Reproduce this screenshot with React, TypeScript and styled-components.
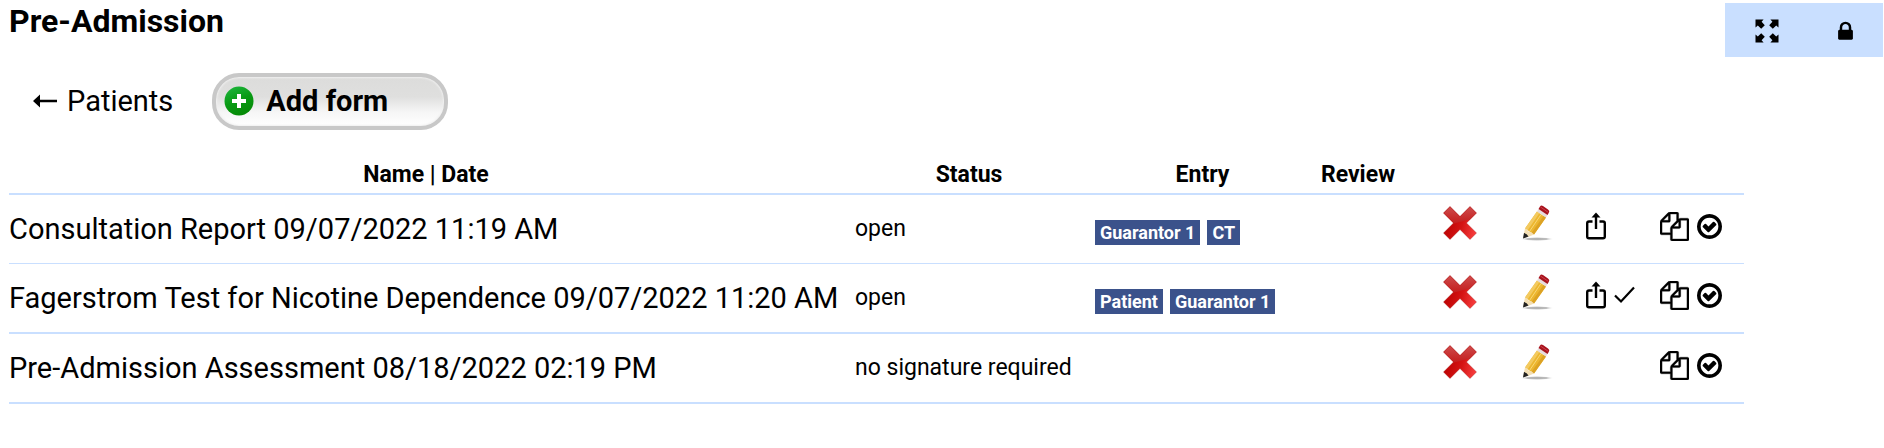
import React from 'react';
import styled, { createGlobalStyle } from 'styled-components';

const GlobalStyle = createGlobalStyle`
  *, *::before, *::after { box-sizing: border-box; }
  body {
    margin: 0;
    background: #fff;
    color: #000;
    font-family: Roboto, "Liberation Sans", sans-serif;
  }
`;

const LINE = '#c9dfff';

const Page = styled.main`
  padding: 3px 0 32px 9px;
`;

const Header = styled.header`
  display: flex;
  justify-content: space-between;
  align-items: flex-start;
`;

const Title = styled.h1`
  margin: 0;
  font-size: 32px;
  line-height: 36px;
  font-weight: 700;
`;

const Toolbar = styled.div`
  display: flex;
  height: 54px;
  margin-right: 1px;
  background: ${LINE};
`;

const PlainButton = styled.button`
  display: flex;
  align-items: center;
  justify-content: center;
  padding: 0;
  border: 0;
  background: none;
  color: inherit;
  cursor: pointer;
`;

const ToolButton = styled(PlainButton)`
  width: 79px;
  padding: 2px 0 0 4px;
`;

const Nav = styled.nav`
  display: flex;
  align-items: center;
  gap: 39px;
  padding: 16px 0 0 24px;
`;

const BackLink = styled.a`
  display: flex;
  align-items: center;
  gap: 9px;
  padding-bottom: 2px;
  color: inherit;
  font-size: 29px;
  line-height: 36px;
  text-decoration: none;
`;

const AddButton = styled.button`
  display: flex;
  align-items: center;
  gap: 12px;
  min-width: 236px;
  height: 57px;
  padding: 0 8px 2px;
  border: 4px solid #c8c8c8;
  border-radius: 27px;
  background: linear-gradient(#dcdcdb 0%, #dfdfde 40%, #f6f6f6 72%, #fff 100%);
  box-shadow: inset 0 0 2px 1px #f0f0f0;
  color: #000;
  font: 700 29px/36px Roboto, "Liberation Sans", sans-serif;
  cursor: pointer;
`;

const TableArea = styled.section`
  padding: 26px 140px 0 0;
`;

const Table = styled.table`
  width: 100%;
  table-layout: fixed;
  border-collapse: separate;
  border-spacing: 0;
`;

const Col = styled.col<{ $w?: number }>`
  width: ${(p) => (p.$w ? `${p.$w}px` : 'auto')};
`;

const HeadCell = styled.th`
  height: 39px;
  padding: 0;
  border-bottom: 2px solid ${LINE};
  font-size: 23px;
  line-height: 28px;
  font-weight: 700;
  text-align: center;
`;

const Row = styled.tr<{ $line: number }>`
  > td {
    height: ${(p) => 68 + p.$line}px;
    border-bottom: ${(p) => p.$line}px solid ${LINE};
  }
`;

const Cell = styled.td`
  padding: 0;
  vertical-align: middle;
  white-space: nowrap;
`;

const NameCell = styled(Cell)`
  font-size: 29px;
  line-height: 36px;
`;

const StatusCell = styled(Cell)`
  padding-left: 12px;
  font-size: 23px;
  line-height: 28px;
`;

const Tags = styled.div`
  display: flex;
  gap: 7px;
  padding-top: 6px;
`;

const Tag = styled.span`
  padding: 1px 5px 0;
  background: #3b528b;
  color: #fff;
  font-size: 18px;
  line-height: 24px;
  font-weight: 700;
`;

const Picture = styled.div`
  display: flex;
  padding: 0 0 12px 36px;
`;

const EditPicture = styled(Picture)`
  padding-left: 25px;
`;

const Glyphs = styled.div`
  display: flex;
  align-items: center;
  gap: 8px;
  padding: 0 0 6px 10px;
`;

const Svg = styled.svg`
  display: block;
  flex: none;
`;

const ExpandIcon = () => (
  <Svg width="24" height="24" viewBox="0 0 24 24" fill="#000" aria-hidden="true">
    {[0, 90, 180, 270].map((a) => (
      <path key={a} transform={`rotate(${a} 12 12)`} d="M.5.5H8.600L6.600 2.800 9.800 6.200 6.200 9.800 2.800 6.600.5 8.600Z" />
    ))}
  </Svg>
);

const LockIcon = () => (
  <Svg width="23" height="23" viewBox="0 0 1792 1792" fill="#000" aria-hidden="true">
    <path d="M640 768h512v-192q0-106-75-181t-181-75-181 75-75 181v192zm832 96v576q0 40-28 68t-68 28h-960q-40 0-68-28t-28-68v-576q0-40 28-68t68-28h32v-192q0-184 132-316t316-132 316 132 132 316v192h32q40 0 68 28t28 68z" />
  </Svg>
);

const ArrowIcon = () => (
  <Svg width="25" height="14" viewBox="0 0 25 14" aria-hidden="true">
    <path d="M0 7 7 .5V5.800H24V8.200H7V13.500Z" fill="#000" />
  </Svg>
);

const PlusIcon = () => (
  <Svg width="30" height="30" viewBox="0 0 30 30" aria-hidden="true">
    <defs>
      <linearGradient id="plus-fill" x1="0.2" y1="0" x2="0.6" y2="1">
        <stop offset="0" stopColor="#1db53c" />
        <stop offset="0.5" stopColor="#089a14" />
        <stop offset="1" stopColor="#068a06" />
      </linearGradient>
    </defs>
    <circle cx="15" cy="15" r="14.500" fill="url(#plus-fill)" />
    <path d="M13 8h4v5h5v4h-5v5h-4v-5H8v-4h5Z" fill="#fff" />
  </Svg>
);

const CrossIcon = () => (
  <Svg width="36" height="36" viewBox="0 0 36 36" aria-hidden="true">
    <defs>
      <linearGradient id="cross-fill" x1="0" y1="0.6" x2="1" y2="0.9">
        <stop offset="0" stopColor="#b90000" />
        <stop offset="0.5" stopColor="#d41414" />
        <stop offset="1" stopColor="#ff4747" />
      </linearGradient>
      <linearGradient id="cross-shine" x1="0" y1="0" x2="0" y2="1">
        <stop offset="0" stopColor="#cf5050" />
        <stop offset="1" stopColor="#c41c1c" />
      </linearGradient>
      <clipPath id="cross-clip">
        <path d="M8 1.500 18 11.500 28 1.500 34.500 8 24.500 18 34.500 28 28 34.500 18 24.500 8 34.500 1.500 28 11.500 18 1.500 8Z" />
      </clipPath>
    </defs>
    <g clipPath="url(#cross-clip)">
      <path d="M0 0h36v36H0Z" fill="url(#cross-fill)" />
      <path d="M0 0h36v15Q26 14 18 17T0 18Z" fill="url(#cross-shine)" />
    </g>
    <path d="M8 1.500 18 11.500 28 1.500 34.500 8 24.500 18 34.500 28 28 34.500 18 24.500 8 34.500 1.500 28 11.500 18 1.500 8Z" fill="none" stroke="#a01818" strokeOpacity="0.350" />
  </Svg>
);

const PencilIcon = () => (
  <Svg width="36" height="36" viewBox="0 0 36 36" aria-hidden="true">
    <defs>
      <radialGradient id="pencil-shadow">
        <stop offset="0" stopColor="#aaa" />
        <stop offset="0.6" stopColor="#bebebe" />
        <stop offset="1" stopColor="#fff" stopOpacity="0" />
      </radialGradient>
    </defs>
    <ellipse cx="18" cy="34" rx="17" ry="2" fill="url(#pencil-shadow)" />
    <path d="M6 23.500 18 6.500 27 12.500 15 29.500Z" fill="#ecb62f" />
    <path d="M6 23.500 18 6.500 20.500 8 8.500 25.500Z" fill="#f3ca60" />
    <path d="M12.500 28 24.500 11 27 12.500 15 29.500Z" fill="#dca224" />
    <path d="M10.500 26.500 22 9.500" stroke="#f8d778" fill="none" />
    <path d="M6 23.500Q8.500 24 9.500 26.500 12.500 26.500 15 29.500L9 32 4 33Z" fill="#f3dfb4" />
    <path d="M5 28Q8 28.500 9.500 31.500L4 33.500Z" fill="#222" />
    <path d="M18 6.500 19.500 4 28.500 10 27 12.500Z" fill="#e6dcdc" />
    <path d="M19.500 4 21 1.500Q22 0 24 1L29 4.500Q31 6 30 7.500L28.500 10Z" fill="#a8121c" />
    <path d="M21.500 2 29.500 7.500" stroke="#c9434f" fill="none" />
  </Svg>
);

const ShareIcon = () => (
  <Svg width="20" height="28" viewBox="0 0 20 28" fill="none" stroke="#000" strokeWidth="2.400" aria-hidden="true">
    <path d="M6.500 9.500H3Q1.200 9.500 1.200 11.300V24.500Q1.200 26.300 3 26.300H17Q18.800 26.300 18.800 24.500V11.300Q18.800 9.500 17 9.500H13.500" />
    <path d="M10 17V4" />
    <path d="M10 .5 14.500 5.500H5.500Z" fill="#000" stroke="none" />
  </Svg>
);

const CheckIcon = () => (
  <Svg width="21" height="18" viewBox="0 0 21 18" fill="none" stroke="#000" strokeWidth="2.200" aria-hidden="true">
    <path d="M1 9.500 7 15.500 20 1.500" />
  </Svg>
);

const CopyIcon = () => (
  <Svg width="29" height="29" viewBox="0 0 1792 1792" fill="#000" stroke="#000" strokeWidth="20" aria-hidden="true">
    <path d="M1696 384q40 0 68 28t28 68v1216q0 40-28 68t-68 28h-960q-40 0-68-28t-28-68v-288h-544q-40 0-68-28t-28-68v-672q0-40 20-88t48-76l408-408q28-28 76-48t88-20h416q40 0 68 28t28 68v328q68-40 128-40h416zm-544 213l-299 299h299v-299zm-640-384l-299 299h299v-299zm196 647l316-316v-416h-384v416q0 40-28 68t-68 28h-416v640h512v-256q0-40 20-88t48-76zm956 804v-1152h-384v416q0 40-28 68t-68 28h-416v640h896z" />
  </Svg>
);

const DoneIcon = () => (
  <Svg width="25" height="25" viewBox="128 128 1536 1536" fill="#000" aria-hidden="true">
    <path d="M1299 813l-422 422q-19 19-45 19t-45-19l-294-294q-19-19-19-45t19-45l102-102q19-19 45-19t45 19l147 147 275-275q19-19 45-19t45 19l102 102q19 19 19 45t-19 45zm141 83q0-148-73-273t-198-198-273-73-273 73-198 198-73 273 73 273 198 198 273 73 273-73 198-198 73-273zm224 0q0 209-103 385.500t-279.500 279.500-385.500 103-385.500-103-279.500-279.500-103-385.500 103-385.500 279.500-279.500 385.500-103 385.500 103 279.500 279.500 103 385.500z" />
  </Svg>
);

type Form = {
  name: string;
  status: string;
  entry: string[];
  share?: boolean;
  check?: boolean;
  line: number;
};

const forms: Form[] = [
  { name: 'Consultation Report 09/07/2022 11:19 AM', status: 'open', entry: ['Guarantor 1', 'CT'], share: true, line: 1 },
  { name: 'Fagerstrom Test for Nicotine Dependence 09/07/2022 11:20 AM', status: 'open', entry: ['Patient', 'Guarantor 1'], share: true, check: true, line: 2 },
  { name: 'Pre-Admission Assessment 08/18/2022 02:19 PM', status: 'no signature required', entry: [], line: 2 },
];

export default function App() {
  return (
    <>
      <GlobalStyle />
      <Page>
        <Header>
          <Title>Pre-Admission</Title>
          <Toolbar>
            <ToolButton type="button" aria-label="Full screen"><ExpandIcon /></ToolButton>
            <ToolButton type="button" aria-label="Lock"><LockIcon /></ToolButton>
          </Toolbar>
        </Header>
        <Nav>
          <BackLink href="#patients"><ArrowIcon />Patients</BackLink>
          <AddButton type="button"><PlusIcon />Add form</AddButton>
        </Nav>
        <TableArea>
          <Table>
            <colgroup>
              <Col />
              <Col $w={252} />
              <Col $w={215} />
              <Col $w={96} />
              <Col $w={88} />
              <Col $w={82} />
              <Col $w={74} />
              <Col $w={94} />
            </colgroup>
            <thead>
              <tr>
                <HeadCell scope="col">Name | Date</HeadCell>
                <HeadCell scope="col">Status</HeadCell>
                <HeadCell scope="col">Entry</HeadCell>
                <HeadCell scope="col">Review</HeadCell>
                <HeadCell colSpan={4} aria-label="Actions" />
              </tr>
            </thead>
            <tbody>
              {forms.map((f) => (
                <Row key={f.name} $line={f.line}>
                  <NameCell>{f.name}</NameCell>
                  <StatusCell>{f.status}</StatusCell>
                  <Cell>
                    <Tags>{f.entry.map((e) => <Tag key={e}>{e}</Tag>)}</Tags>
                  </Cell>
                  <Cell />
                  <Cell>
                    <Picture><PlainButton type="button" aria-label="Delete"><CrossIcon /></PlainButton></Picture>
                  </Cell>
                  <Cell>
                    <EditPicture><PlainButton type="button" aria-label="Edit"><PencilIcon /></PlainButton></EditPicture>
                  </Cell>
                  <Cell>
                    <Glyphs>
                      {f.share && <PlainButton type="button" aria-label="Share"><ShareIcon /></PlainButton>}
                      {f.check && <PlainButton type="button" aria-label="Mark checked"><CheckIcon /></PlainButton>}
                    </Glyphs>
                  </Cell>
                  <Cell>
                    <Glyphs>
                      <PlainButton type="button" aria-label="Copy"><CopyIcon /></PlainButton>
                      <PlainButton type="button" aria-label="Complete"><DoneIcon /></PlainButton>
                    </Glyphs>
                  </Cell>
                </Row>
              ))}
            </tbody>
          </Table>
        </TableArea>
      </Page>
    </>
  );
}
